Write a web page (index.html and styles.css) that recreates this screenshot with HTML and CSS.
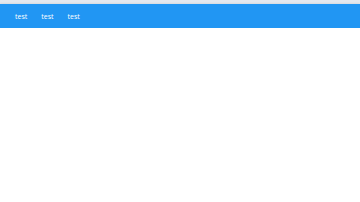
FILE: index.html
```html
<!DOCTYPE html>
<html lang="en">
<head>
  <meta charset="UTF-8">
  <meta name="viewport" content="width=device-width, initial-scale=1.0">
  <title>test</title>
  <link rel="stylesheet" href="styles.css">
</head>
<body>
  <div class="topline"></div>
  <!-- ナビゲーション -->
  <nav class="navbar">
    <a href="#" class="nav-link">test</a>
    <a href="#" class="nav-link">test</a>
    <a href="#" class="nav-link">test</a>
  </nav>
</body>
</html>
```
FILE: styles.css
```css
/* 全体のスタイル */
body {
  font-family: "Open Sans", "Liberation Sans", sans-serif;
  background-color: #fff;
  margin: 0;
  padding: 0;
}

.topline {
  height: 4px;
  background-color: #e4e8ee;
}

.navbar {
  display: flex;
  align-items: center;
  height: 24px;
  padding-left: 15px;
  gap: 14px;
  background-color: #2196f3;
  box-shadow: 0 1px 3px rgba(0, 0, 0, 0.25);
}

.nav-link {
  color: #fff;
  text-decoration: none;
  font-size: 7px;
}
```
